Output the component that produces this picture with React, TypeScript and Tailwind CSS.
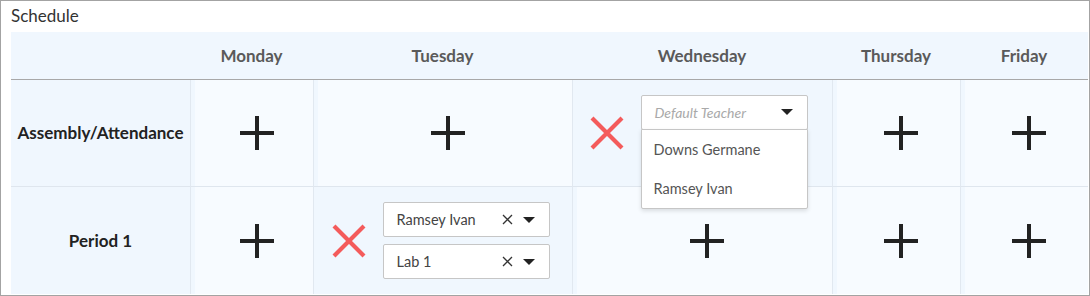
const days = ['Monday', 'Tuesday', 'Wednesday', 'Thursday', 'Friday']

function Plus() {
  return (
    <svg width="34" height="34" viewBox="0 0 34 34" className="block">
      <rect x="0" y="15" width="34" height="4" fill="#222" />
      <rect x="15" y="0" width="4" height="34" fill="#222" />
    </svg>
  )
}

function RedX() {
  return (
    <svg width="34" height="34" viewBox="0 0 34 34" className="block shrink-0">
      <path d="M2 2 L32 32 M32 2 L2 32" stroke="#f45b5b" strokeWidth="4.2" />
    </svg>
  )
}

function Caret() {
  return (
    <svg width="12" height="6" viewBox="0 0 12 6" className="block">
      <path d="M0 0 L12 0 L6 6 Z" fill="#222" />
    </svg>
  )
}

function Clear() {
  return (
    <svg width="11" height="11" viewBox="0 0 11 11" className="block">
      <path d="M1 1 L10 10 M10 1 L1 10" stroke="#333" strokeWidth="1.3" />
    </svg>
  )
}

function Select({ value, placeholder, clearable }: { value?: string; placeholder?: string; clearable?: boolean }) {
  return (
    <div className="h-[35px] w-[167px] bg-white border border-[#c6c6c6] rounded-[2px] flex items-center pl-[13px] pr-[14px]">
      {value ? (
        <span className="flex-1 text-[14.5px] text-[#444]">{value}</span>
      ) : (
        <span className="flex-1 text-[14px] italic text-[#a9a9a9]">{placeholder}</span>
      )}
      {clearable && (
        <span className="mr-[10px]">
          <Clear />
        </span>
      )}
      <Caret />
    </div>
  )
}

function DayCell({ active, last, children }: { active?: boolean; last?: boolean; children?: React.ReactNode }) {
  return (
    <div className={`border-l border-[#e1e8f0] bg-[#f0f7fe] pl-[4px] ${last ? '' : 'border-b border-b-[#dfe6ee]'}`}>
      <div className={`h-full flex items-center justify-center pl-[5px] ${active ? 'bg-[#f0f7fe]' : 'bg-[#f7fbff]'}`}>
        {children}
      </div>
    </div>
  )
}

export default function App() {
  return (
    <div className="w-[1090px] h-[296px] border border-[#a3a3a3] overflow-hidden bg-white font-['Lato','Liberation_Sans',sans-serif]">
      <div className="h-[31px] pl-[10px] pt-[4px] text-[17px] leading-[22px] text-[#333]">Schedule</div>

      <div className="ml-[10px] grid grid-cols-[179px_123px_259px_260px_128px_128px] grid-rows-[48px_107px_107px]">
        {/* header */}
        <div className="bg-[#f0f7fe] border-b border-[#a8a8a8]" />
        {days.map((d) => (
          <div key={d} className="bg-[#f0f7fe] border-b border-[#a8a8a8] flex items-center justify-center text-[17px] font-bold text-[#5a5a5a]">
            {d}
          </div>
        ))}

        {/* Assembly/Attendance */}
        <div className="bg-[#f0f7fe] border-b border-[#dfe6ee] flex items-center justify-center text-[17px] font-bold text-[#222]">
          Assembly/Attendance
        </div>
        <DayCell><Plus /></DayCell>
        <DayCell><Plus /></DayCell>
        <DayCell active>
          <div className="flex items-center gap-[17px] -ml-[17px]">
            <RedX />
            <div className="flex flex-col gap-[7px]">
              <div className="relative">
                <Select placeholder="Default Teacher" />
                <div className="absolute left-0 top-full -mt-px w-[167px] bg-white border border-[#c6c6c6] rounded-b-[2px] shadow-[0_2px_4px_rgba(0,0,0,0.12)] z-10">
                  <div className="h-[39px] flex items-center pl-[12px] pt-[1px] text-[14.5px] text-[#555]">Downs Germane</div>
                  <div className="h-[39px] flex items-center pl-[12px] pt-[1px] text-[14.5px] text-[#555]">Ramsey Ivan</div>
                </div>
              </div>
              {/* room select, covered by the open menu */}
              <div className="h-[35px] w-[167px] bg-white border border-[#c6c6c6] rounded-[2px]" />
            </div>
          </div>
        </DayCell>
        <DayCell><Plus /></DayCell>
        <DayCell><Plus /></DayCell>

        {/* Period 1 */}
        <div className="bg-[#f0f7fe] flex items-center justify-center text-[17px] font-bold text-[#222]">
          Period 1
        </div>
        <DayCell last><Plus /></DayCell>
        <DayCell last active>
          <div className="flex items-center gap-[17px] -ml-[14px]">
            <RedX />
            <div className="flex flex-col gap-[7px]">
              <Select value="Ramsey Ivan" clearable />
              <Select value="Lab 1" clearable />
            </div>
          </div>
        </DayCell>
        <DayCell last><Plus /></DayCell>
        <DayCell last><Plus /></DayCell>
        <DayCell last><Plus /></DayCell>
      </div>
    </div>
  )
}
